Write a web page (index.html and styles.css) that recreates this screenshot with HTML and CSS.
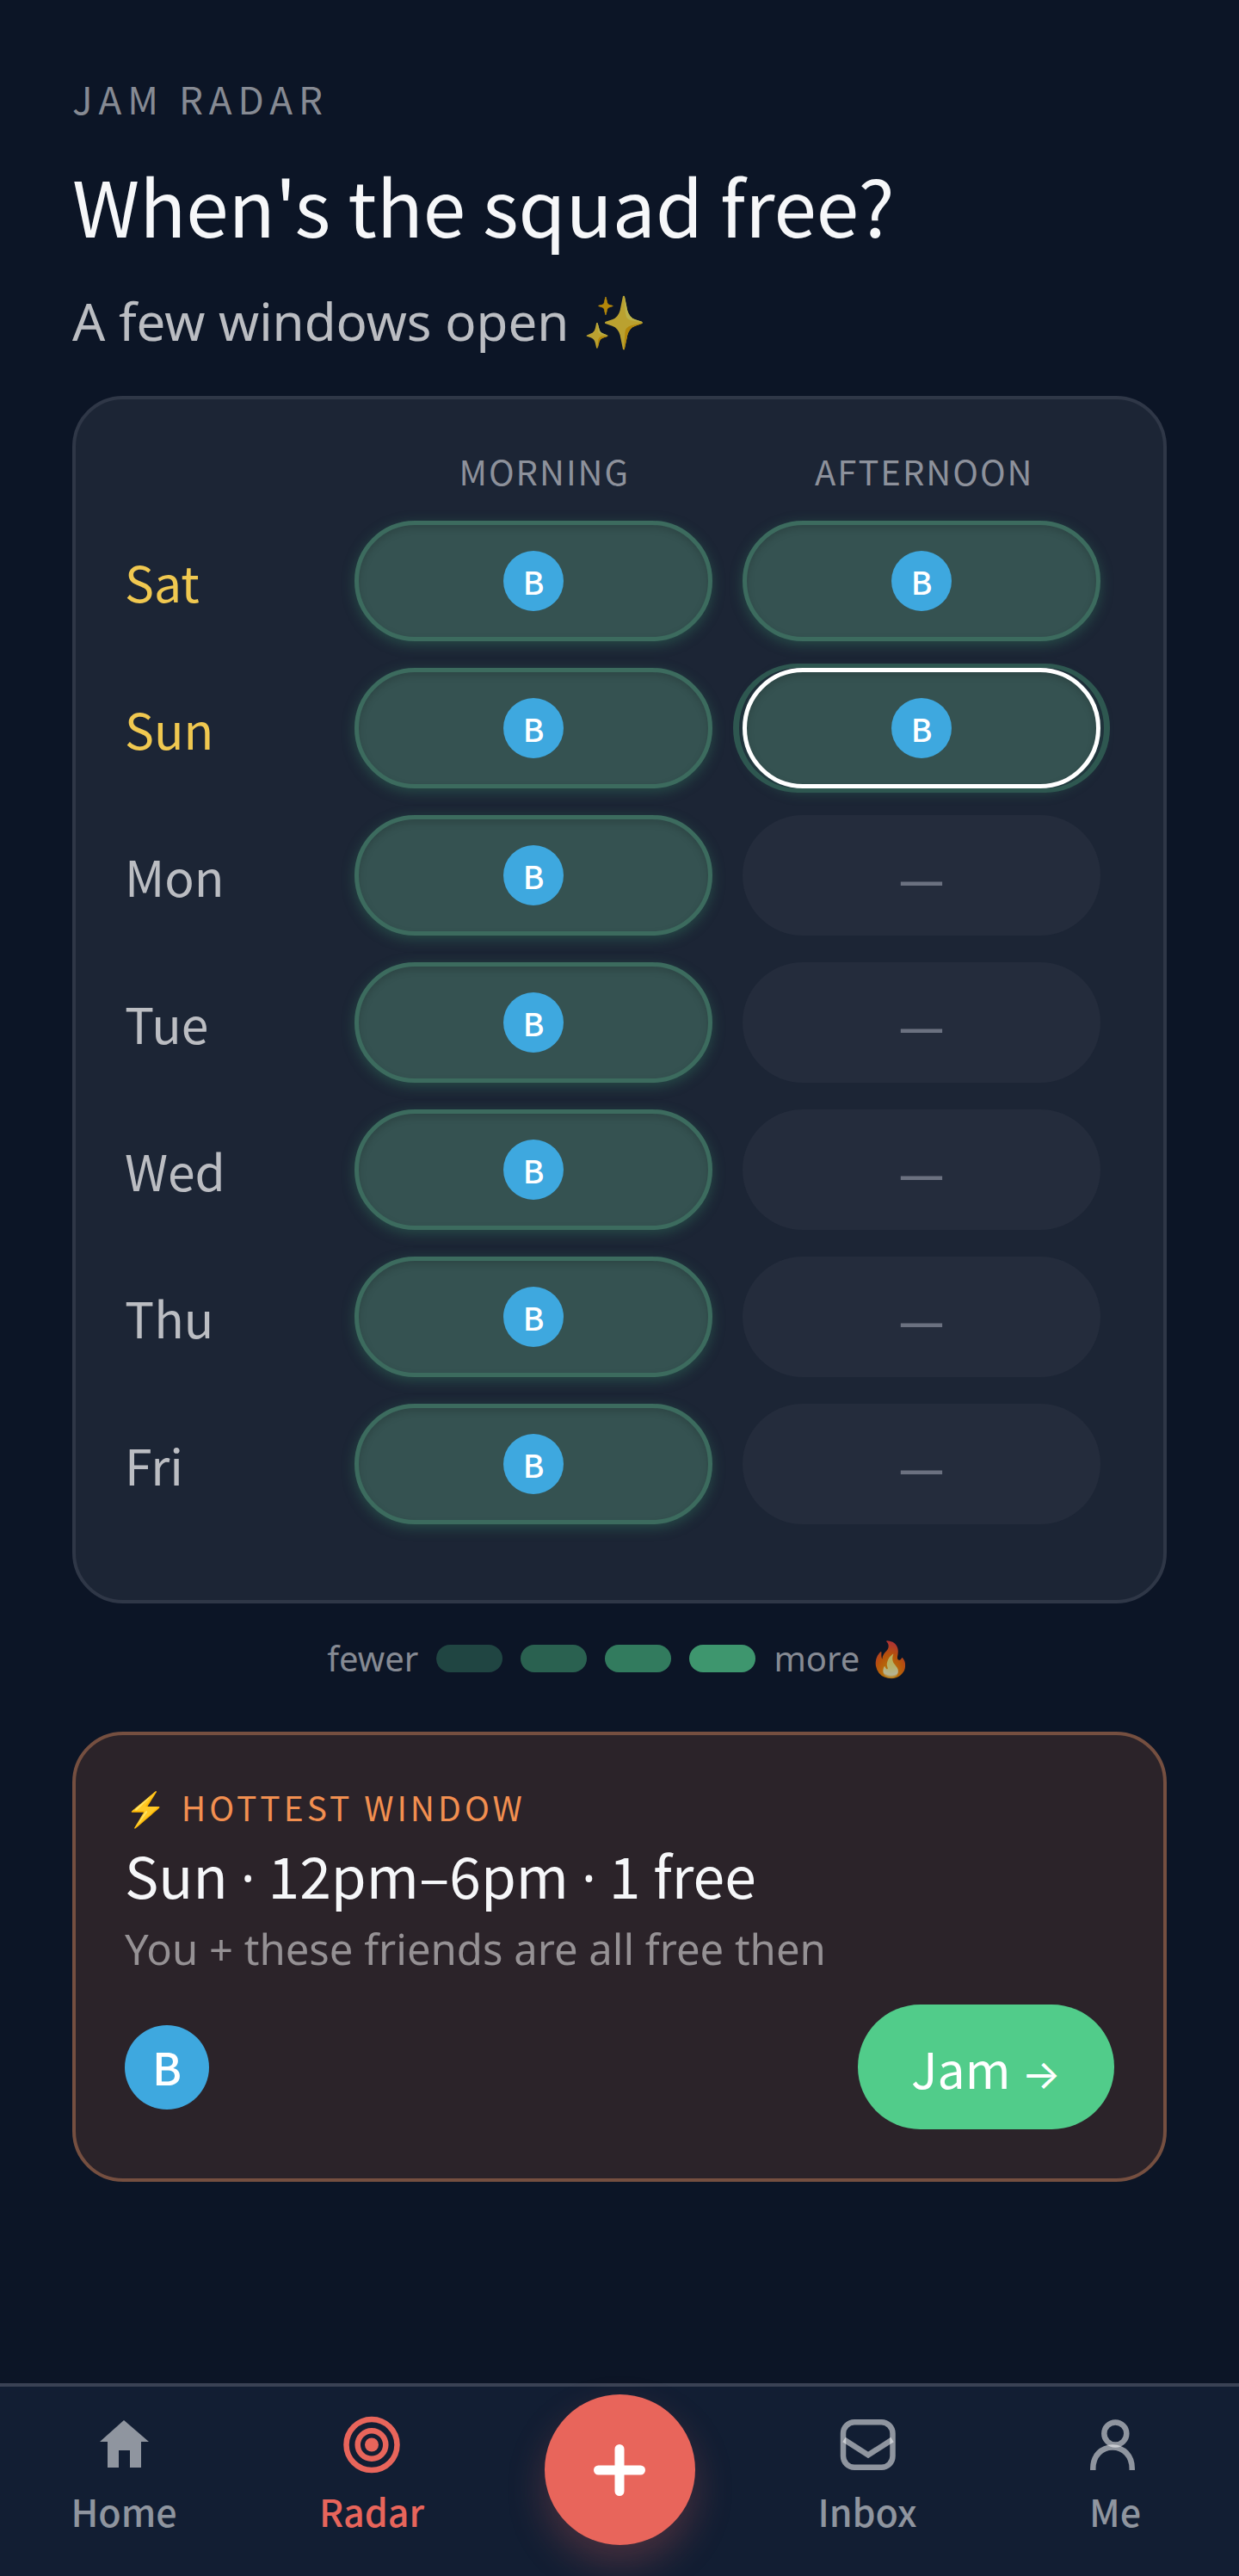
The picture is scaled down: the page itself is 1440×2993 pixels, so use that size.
FILE: index.html
```html
<!DOCTYPE html>
<html lang="en">
<head>
    <meta charset="UTF-8">
    <meta name="viewport" content="width=device-width, initial-scale=1.0">
    <title>Jam Radar</title>
    <link rel="stylesheet" href="styles.css">
</head>
<body>
    <main class="page">
        <header class="intro">
            <p class="eyebrow">JAM RADAR</p>
            <h1>When's the squad free?</h1>
            <p class="subtitle">A few windows open ✨</p>
        </header>

        <!-- Availability grid -->
        <section class="card">
            <table class="radar">
                <thead>
                    <tr><td></td><th scope="col">MORNING</th><th scope="col">AFTERNOON</th></tr>
                </thead>
                <tbody>
                    <tr class="weekend">
                        <th scope="row">Sat</th>
                        <td><button class="slot free"><span class="avatar">B</span></button></td>
                        <td><button class="slot free"><span class="avatar">B</span></button></td>
                    </tr>
                    <tr class="weekend">
                        <th scope="row">Sun</th>
                        <td><button class="slot free"><span class="avatar">B</span></button></td>
                        <td><button class="slot free selected"><span class="avatar">B</span></button></td>
                    </tr>
                    <tr>
                        <th scope="row">Mon</th>
                        <td><button class="slot free"><span class="avatar">B</span></button></td>
                        <td><button class="slot">—</button></td>
                    </tr>
                    <tr>
                        <th scope="row">Tue</th>
                        <td><button class="slot free"><span class="avatar">B</span></button></td>
                        <td><button class="slot">—</button></td>
                    </tr>
                    <tr>
                        <th scope="row">Wed</th>
                        <td><button class="slot free"><span class="avatar">B</span></button></td>
                        <td><button class="slot">—</button></td>
                    </tr>
                    <tr>
                        <th scope="row">Thu</th>
                        <td><button class="slot free"><span class="avatar">B</span></button></td>
                        <td><button class="slot">—</button></td>
                    </tr>
                    <tr>
                        <th scope="row">Fri</th>
                        <td><button class="slot free"><span class="avatar">B</span></button></td>
                        <td><button class="slot">—</button></td>
                    </tr>
                </tbody>
            </table>
        </section>

        <div class="legend">
            <span>fewer</span>
            <i class="level level-1"></i>
            <i class="level level-2"></i>
            <i class="level level-3"></i>
            <i class="level level-4"></i>
            <span>more <span class="fire">🔥</span></span>
        </div>

        <!-- Best slot -->
        <section class="card hottest">
            <p class="hot-label">⚡ HOTTEST WINDOW</p>
            <h2>Sun <span class="dot">·</span> 12pm–6pm <span class="dot">·</span> 1 free</h2>
            <p class="hot-note">You + these friends are all free then</p>
            <div class="hot-row">
                <span class="avatar avatar-large">B</span>
                <button class="jam">Jam <span class="arrow">→</span></button>
            </div>
        </section>
    </main>

    <nav class="tabs">
        <a class="tab" href="#home">
            <svg viewBox="0 0 88 88" fill="currentColor"><path d="M44 16L16 41h9v30h13V51h13v20h13V41h9z"/></svg>
            Home
        </a>
        <a class="tab active" href="#radar">
            <svg viewBox="0 0 88 88" fill="none" stroke="currentColor" stroke-width="6.5"><circle cx="44" cy="44.5" r="29.5"/><circle cx="44" cy="44.5" r="16.3"/><circle cx="44" cy="44.5" r="8" fill="currentColor" stroke="none"/></svg>
            Radar
        </a>
        <button class="add" aria-label="New jam">
            <svg viewBox="0 0 88 88" fill="none" stroke="currentColor" stroke-width="11" stroke-linecap="round"><path d="M44 19.5v49M19.5 44h49"/></svg>
        </button>
        <a class="tab" href="#inbox">
            <svg viewBox="0 0 88 88" fill="none" stroke="currentColor" stroke-width="6.5"><rect x="16" y="18.3" width="57.5" height="52.5" rx="13"/><path d="M17 38.5l28 18 28-18"/></svg>
            Inbox
        </a>
        <a class="tab" href="#me">
            <svg viewBox="0 0 88 88" fill="none" stroke="currentColor" stroke-width="6.5"><circle cx="44.3" cy="31.5" r="13"/><path d="M18.3 74v-2c0-15 10-24.5 22.7-24.5s22.7 9.5 22.7 24.5v2"/></svg>
            Me
        </a>
    </nav>
</body>
</html>
```
FILE: styles.css
```css
* {
    box-sizing: border-box;
}
body {
    margin: 0;
    min-height: 100vh;
    display: flex;
    flex-direction: column;
    background-color: #0c1526;
    color: #f6f7f9;
    font-family: "Noto Sans CJK SC", sans-serif;
    font-weight: 400;
}
h1, h2, p {
    margin: 0;
    font-weight: 400;
}
button {
    font-family: inherit;
    border: none;
    padding: 0;
    cursor: pointer;
}
.page {
    padding: 84px 84px 60px;
}
.intro {
    display: flex;
    flex-direction: column;
    gap: 38px;
}
.eyebrow {
    font-size: 44px;
    line-height: 60px;
    letter-spacing: 7px;
    color: #868a93;
}
h1 {
    font-size: 89px;
    line-height: 112px;
}
.subtitle {
    font-family: "Noto Sans", sans-serif;
    font-size: 60px;
    line-height: 82px;
    color: rgba(255, 255, 255, 0.72);
}
.card {
    margin-top: 46px;
    padding: 57px;
    border: 4px solid #2f3747;
    border-radius: 59px;
    background-color: #1c2535;
}

/* Grid of days */
.radar {
    display: block;
    padding-bottom: 31px;
}
.radar thead, .radar tbody {
    display: grid;
    gap: 31px;
}
.radar tbody {
    margin-top: 32px;
    padding-right: 16px;
}
.radar tr {
    display: grid;
    grid-template-columns: 232px 1fr 1fr;
    gap: 35px;
    align-items: center;
}
.radar thead tr {
    grid-template-columns: 267px 1fr 1fr;
    gap: 0;
}
.radar th, .radar td {
    padding: 0;
    font-weight: 400;
}
.radar thead th {
    font-size: 40px;
    line-height: 52px;
    letter-spacing: 2px;
    color: #8d919b;
}
.radar tbody th {
    text-align: left;
    font-size: 57px;
    line-height: 80px;
    color: #bbbdc2;
}
.radar .weekend th {
    color: #f0c850;
}
.slot {
    display: flex;
    align-items: center;
    justify-content: center;
    width: 100%;
    height: 140px;
    border: 5px solid transparent;
    border-radius: 70px;
    background-color: #242c3c;
    color: #6b7180;
    font-size: 60px;
    font-weight: 500;
}
.slot.free {
    border-color: #3c6b5e;
    background-color: #355251;
    box-shadow: 0 4px 15px rgba(60, 150, 110, 0.35), inset 0 4px 8px rgba(0, 0, 0, 0.15);
}
.slot.selected {
    position: relative;
    border-color: #fff;
}
/* Ring around the picked slot */
.slot.selected::after {
    content: "";
    position: absolute;
    inset: -10px -16px;
    border: 5px solid #2e5750;
    border-width: 5px 7px;
    border-radius: 75px;
}
.avatar {
    display: flex;
    align-items: center;
    justify-content: center;
    width: 70px;
    height: 70px;
    border-radius: 50%;
    background-color: #3ea8df;
    color: #fff;
    font-size: 37px;
    font-weight: 500;
    line-height: 1;
}
.avatar-large {
    width: 98px;
    height: 98px;
    font-size: 51px;
}

.legend {
    display: flex;
    align-items: center;
    justify-content: center;
    gap: 21px;
    margin-top: 40px;
    font-family: "Noto Sans", sans-serif;
    font-size: 40px;
    line-height: 48px;
    color: #868a93;
}
.fire {
    opacity: 0.7;
}
.level {
    width: 77px;
    height: 32px;
    border-radius: 16px;
}
.level-1 {
    background-color: #204542;
}
.level-2 {
    background-color: #2a6150;
}
.level-3 {
    background-color: #327b5e;
}
.level-4 {
    background-color: #3e966e;
}

.hottest {
    margin-top: 61px;
    border-color: #754f40;
    background-color: #2b2329;
}
.hot-label {
    font-size: 39px;
    line-height: 52px;
    letter-spacing: 4px;
    color: #f28f50;
}
h2 {
    margin-top: 8px;
    font-size: 66px;
    line-height: 88px;
}
.dot {
    font-family: "Open Sans", sans-serif;
    line-height: 1;
}
.hot-note {
    margin-top: 11px;
    font-family: "Noto Sans", sans-serif;
    font-size: 49px;
    line-height: 64px;
    color: #959194;
}
.hot-row {
    display: flex;
    align-items: center;
    justify-content: space-between;
    margin-top: 33px;
}
.jam {
    height: 145px;
    padding: 0 62px;
    border-radius: 73px;
    background-color: #51cc8a;
    color: #fff;
    font-size: 57px;
    line-height: 80px;
}
.arrow {
    font-family: Inter, sans-serif;
    font-size: 48px;
    line-height: 1;
}

/* Bottom bar */
.tabs {
    position: sticky;
    bottom: 0;
    display: grid;
    grid-template-columns: repeat(5, 1fr);
    justify-items: center;
    align-items: start;
    margin-top: auto;
    padding: 23px 0 46px;
    border-top: 4px solid #3a4254;
    background-color: #121e33;
}
.tab {
    display: flex;
    flex-direction: column;
    align-items: center;
    gap: 3px;
    color: rgba(255, 255, 255, 0.53);
    font-size: 43px;
    font-weight: 500;
    line-height: 60px;
    text-decoration: none;
}
.tab svg, .add svg {
    width: 88px;
    height: 88px;
}
.tab.active {
    color: #e8655b;
}
.add {
    display: flex;
    align-items: center;
    justify-content: center;
    width: 175px;
    height: 175px;
    margin: -14px 0 -14px;
    border-radius: 50%;
    background-color: #e8655b;
    color: #fff;
    box-shadow: 0 22px 44px rgba(232, 101, 91, 0.25);
}
```
